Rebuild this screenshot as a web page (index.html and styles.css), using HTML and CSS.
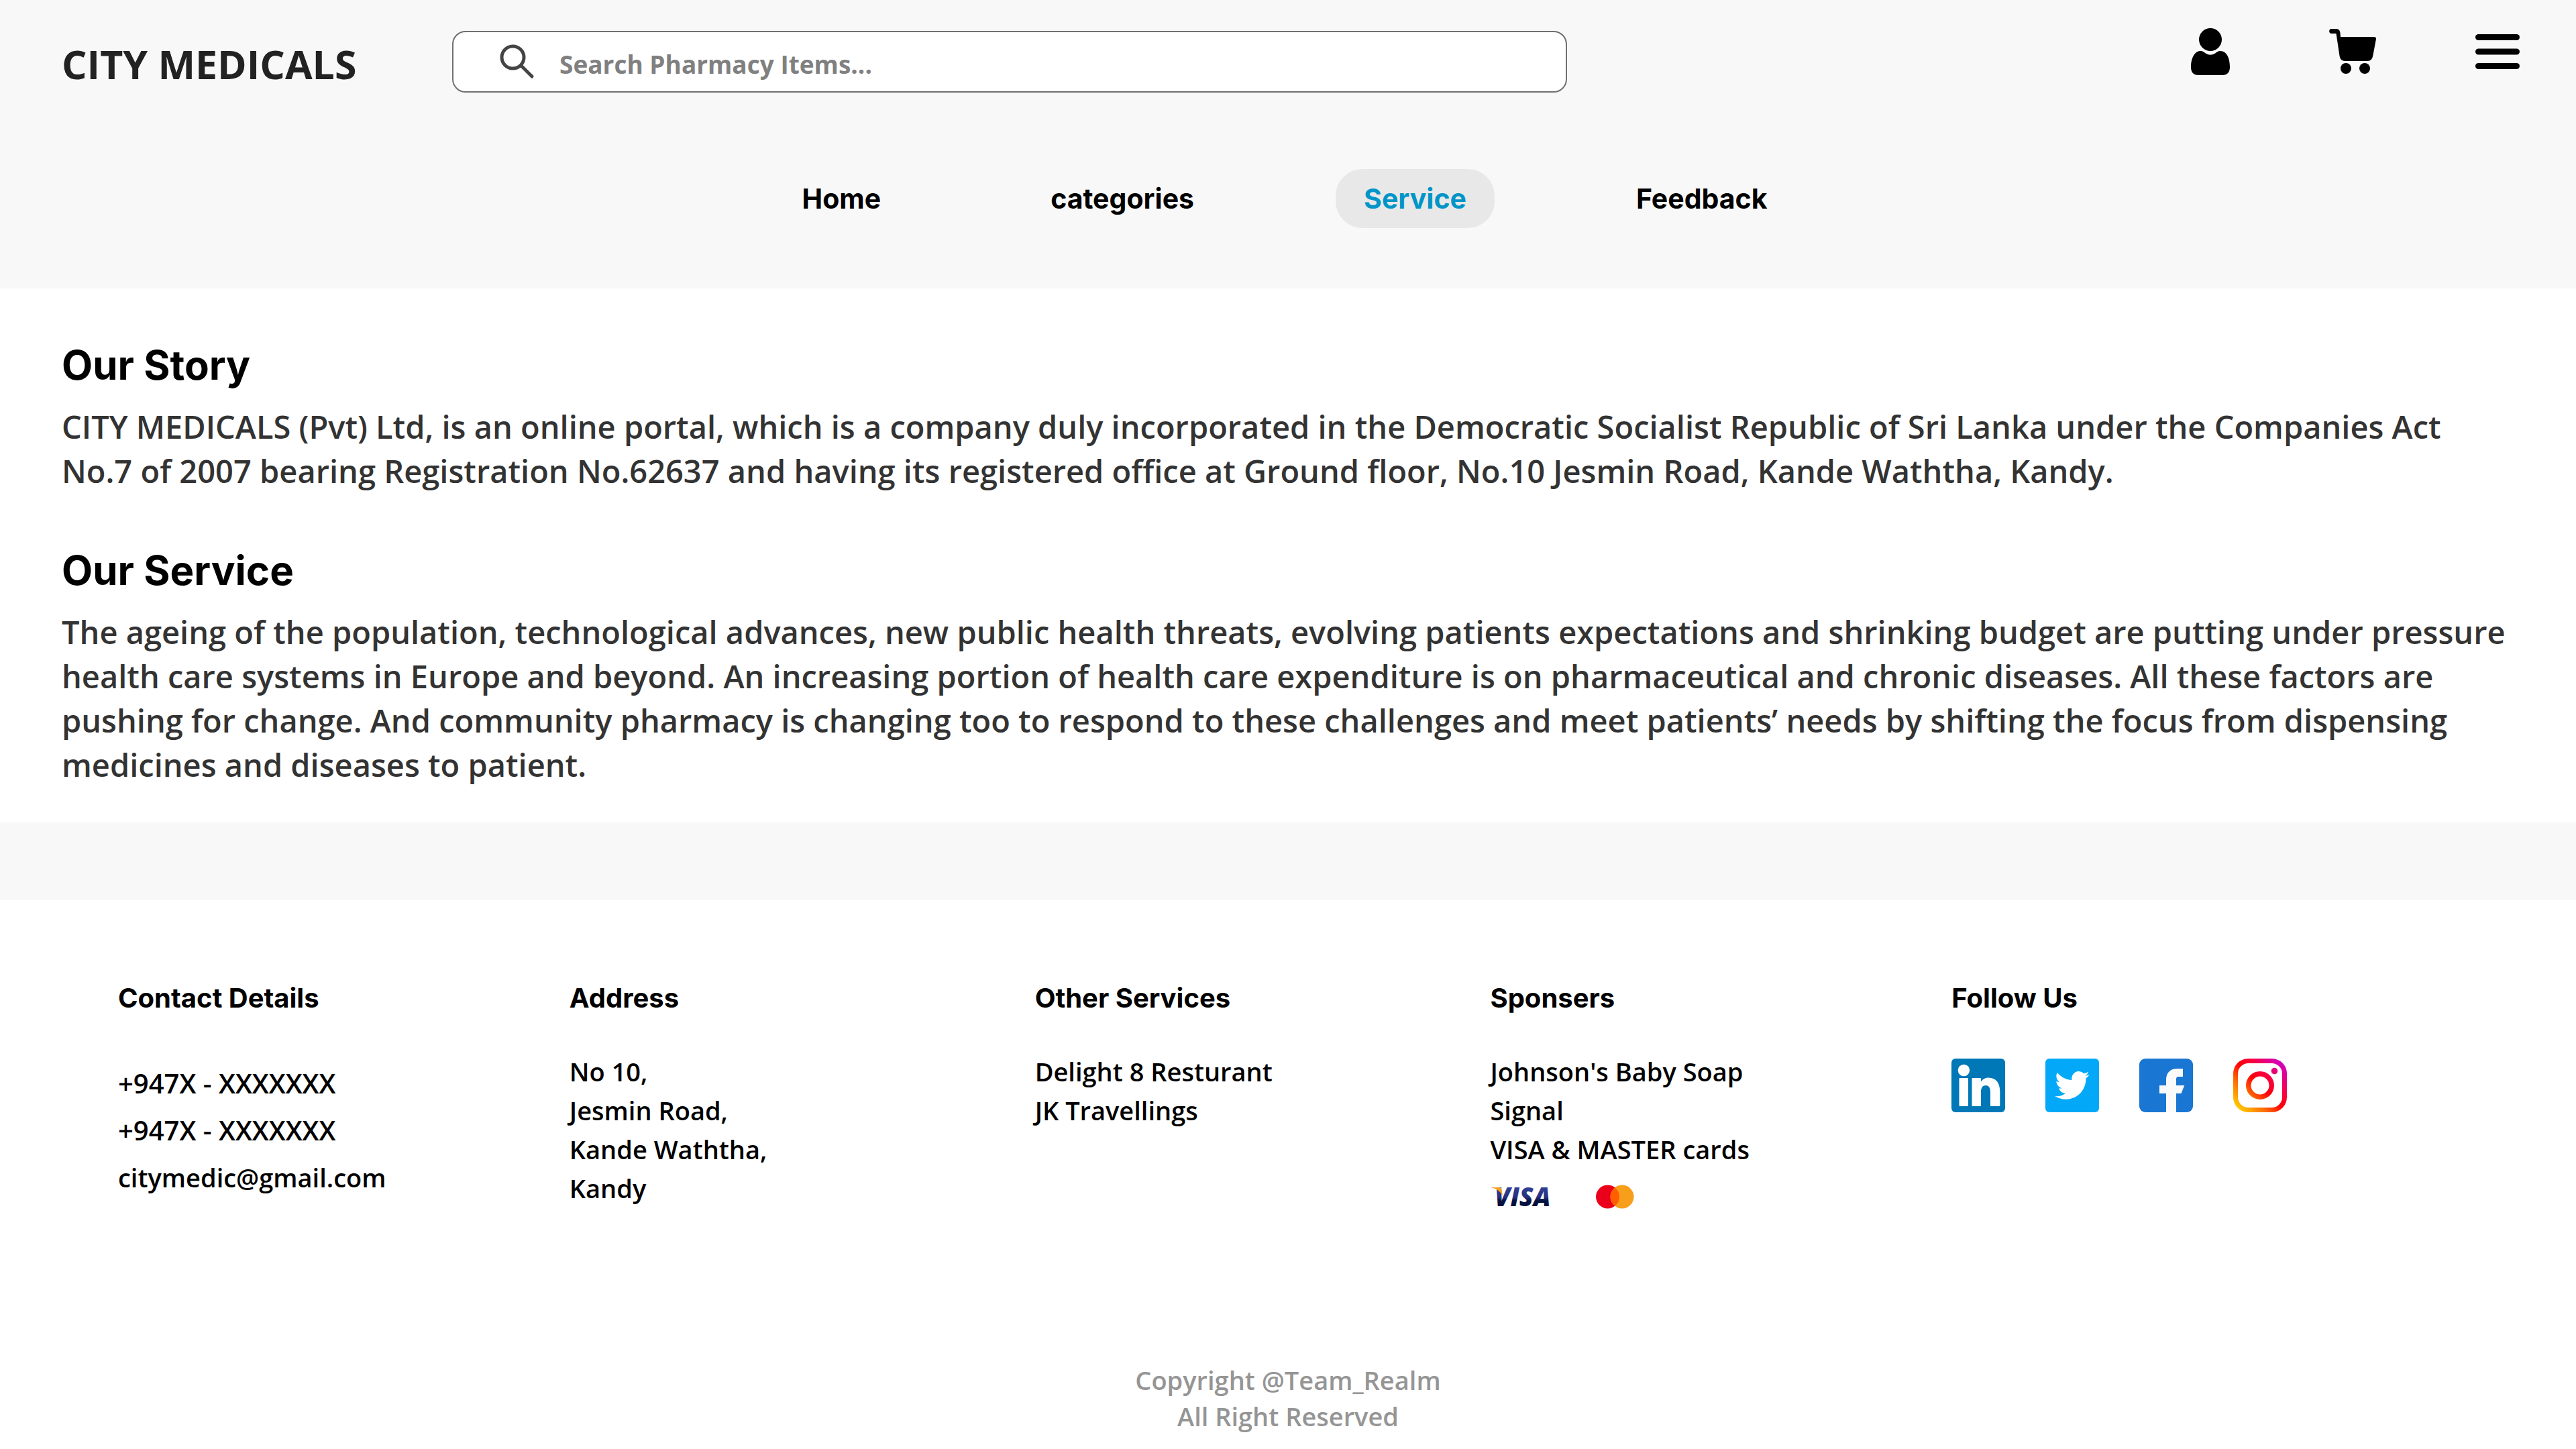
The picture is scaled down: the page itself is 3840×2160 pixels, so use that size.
FILE: index.html
```
<!DOCTYPE html>
<html lang="en">
<head>
<meta charset="utf-8">
<meta name="viewport" content="width=device-width, initial-scale=1">
<title>City Medicals - Service</title>
<link rel="stylesheet" href="styles.css">
</head>
<body>
<header class="header">
  <div class="topbar">
    <a class="brand" href="#">CITY MEDICALS</a>
    <form class="search" role="search">
      <svg class="search-icon" viewBox="0 0 52 52" aria-hidden="true"><circle cx="19.5" cy="19.5" r="16.5"/><path d="M32.5 32.5 48 48"/></svg>
      <input class="search-input" type="search" aria-label="Search pharmacy items" placeholder="Search Pharmacy Items...">
    </form>
    <div class="actions">
      <button class="icon-button" type="button" aria-label="Account">
        <svg width="58" height="70" viewBox="0 0 58 70"><circle cx="29" cy="17" r="17"/><path d="M14 34C6 34 0 44 0 58C0 66 4 70 11 70H47C54 70 58 66 58 58C58 44 53 34 44 34C40 34 38.500 36 36 37.500C31 40.500 27 40.500 22 37.500C19.500 36 18 34 14 34Z"/></svg>
      </button>
      <button class="icon-button" type="button" aria-label="Cart">
        <svg width="70" height="68" viewBox="0 0 70 68"><path d="M3.500 0H10C14 0 16 2 16.500 6L17 12H67C69 12 70 13 70 15L65.500 39C64.500 45 62 48 57 48H24C19 48 16 45 15.500 40L10.500 7H3.500C-1 7-1 0 3.500 0Z"/><circle cx="25" cy="59" r="8"/><circle cx="53" cy="59" r="8"/></svg>
      </button>
      <button class="icon-button" type="button" aria-label="Menu">
        <svg width="66" height="52" viewBox="0 0 66 52"><rect width="66" height="9" rx="4.500"/><rect y="21.500" width="66" height="9" rx="4.500"/><rect y="43" width="66" height="9" rx="4.500"/></svg>
      </button>
    </div>
  </div>
  <nav class="nav" aria-label="Main">
    <a class="nav-link" href="#">Home</a>
    <a class="nav-link" href="#">categories</a>
    <a class="nav-link nav-link-active" href="#" aria-current="page">Service</a>
    <a class="nav-link" href="#">Feedback</a>
  </nav>
</header>

<main class="content">
  <section class="article">
    <h2 class="article-title">Our Story</h2>
    <p class="article-text">CITY MEDICALS (Pvt) Ltd, is an online portal, which is a company duly incorporated in the Democratic Socialist Republic of Sri Lanka under the Companies Act No.7 of 2007 bearing Registration No.62637 and having its registered office at Ground floor, No.10 Jesmin Road, Kande Waththa, Kandy.</p>
  </section>
  <section class="article">
    <h2 class="article-title">Our Service</h2>
    <p class="article-text">The ageing of the population, technological advances, new public health threats, evolving patients expectations and shrinking budget are putting under pressure health care systems in Europe and beyond. An increasing portion of health care expenditure is on pharmaceutical and chronic diseases. All these factors are pushing for change. And community pharmacy is changing too to respond to these challenges and meet patients’ needs by shifting the focus from dispensing medicines and diseases to patient.</p>
  </section>
</main>

<footer class="footer">
  <div class="footer-columns">
    <section>
      <h3 class="footer-title">Contact Details</h3>
      <ul class="footer-list contact-list">
        <li class="phone">+947X - XXXXXXX</li>
        <li class="phone">+947X - XXXXXXX</li>
        <li><a class="mail" href="mailto:citymedic@gmail.com">citymedic@gmail.com</a></li>
      </ul>
    </section>
    <section>
      <h3 class="footer-title">Address</h3>
      <address class="footer-list">No 10,<br>Jesmin Road,<br>Kande Waththa,<br>Kandy</address>
    </section>
    <section>
      <h3 class="footer-title">Other Services</h3>
      <ul class="footer-list">
        <li>Delight 8 Resturant</li>
        <li>JK Travellings</li>
      </ul>
    </section>
    <section>
      <h3 class="footer-title">Sponsers</h3>
      <ul class="footer-list">
        <li>Johnson's Baby Soap</li>
        <li>Signal</li>
        <li>VISA &amp; MASTER cards</li>
      </ul>
      <div class="cards">
        <svg width="108" height="60" viewBox="0 -12 108 60" role="img" aria-label="Visa">
          <defs><linearGradient id="visa" gradientUnits="userSpaceOnUse" x1="0" y1="3" x2="0" y2="31"><stop offset="0" stop-color="#2f4196"/><stop offset=".55" stop-color="#26327f"/><stop offset=".75" stop-color="#03113f"/></linearGradient></defs>
          <text class="visa-text" x="7" y="32" fill="url(#visa)">VISA</text>
          <path d="M1 4H13C16 4 17 5 17.500 8L19 17C16 10 10 6 1 4Z" fill="#f7a01c"/>
        </svg>
        <svg width="57" height="36" viewBox="0 0 57 36" role="img" aria-label="Mastercard"><circle cx="17.500" cy="18" r="17.500" fill="#eb001b"/><circle cx="39" cy="18" r="17.500" fill="#f79e1b"/><path d="M28.250 4.200A17.500 17.500 0 0 1 28.250 31.800A17.500 17.500 0 0 1 28.250 4.200Z" fill="#ff5f00"/></svg>
      </div>
    </section>
    <section>
      <h3 class="footer-title">Follow Us</h3>
      <div class="social">
        <a class="social-link" href="#" aria-label="LinkedIn"><svg viewBox="0 0 80 80"><rect width="80" height="80" rx="6" fill="#0077b7"/><circle cx="18.400" cy="17.500" r="8.700" fill="#fff"/><rect x="11.500" y="29" width="13.500" height="42" rx="1" fill="#fff"/><path d="M31.500 29H43Q44 29 44 30V34.500C46.500 31 50 28.500 55 28.500C67 28.500 72.300 37 72.300 49V70Q72.300 71 71.300 71H59Q58 71 58 70V51C58 44 56.500 40 51 40C46 40 44 44 44 50V70Q44 71 43 71H31.500Q30.500 71 30.500 70V30Q30.500 29 31.500 29Z" fill="#fff"/></svg></a>
        <a class="social-link" href="#" aria-label="Twitter"><svg viewBox="0 0 80 80"><rect width="80" height="80" rx="6" fill="#03a9f8"/><path transform="translate(14.300 14.200) scale(2.140)" d="M23.953 4.570a10 10 0 01-2.825.775 4.958 4.958 0 002.163-2.723c-.951.555-2.005.959-3.127 1.184a4.920 4.920 0 00-8.384 4.482C7.690 8.095 4.067 6.130 1.640 3.162a4.822 4.822 0 00-.666 2.475c0 1.710.870 3.213 2.188 4.096a4.904 4.904 0 01-2.228-.616v.060a4.923 4.923 0 003.946 4.827 4.996 4.996 0 01-2.212.085 4.936 4.936 0 004.604 3.417 9.867 9.867 0 01-6.102 2.105c-.390 0-.779-.023-1.170-.067a13.995 13.995 0 007.557 2.209c9.053 0 13.998-7.496 13.998-13.985 0-.210 0-.420-.015-.630A9.935 9.935 0 0024 4.590z" fill="#fff"/></svg></a>
        <a class="social-link" href="#" aria-label="Facebook"><svg viewBox="0 0 80 80"><rect width="80" height="80" rx="9" fill="#1976d2"/><path d="M40 80V52H30V40H40V32C40 21 46 15 57 15H65V27H59C56 27 55 28 55 31V40H67.300L62.500 52H55V80Z" fill="#fafafa"/></svg></a>
        <a class="social-link" href="#" aria-label="Instagram"><svg viewBox="0 0 80 80"><defs><linearGradient id="insta" gradientUnits="userSpaceOnUse" x1="7" y1="73" x2="73" y2="7"><stop offset="0" stop-color="#ffc800"/><stop offset=".28" stop-color="#ff6a00"/><stop offset=".5" stop-color="#ff0008"/><stop offset=".68" stop-color="#f9003c"/><stop offset="1" stop-color="#d400c0"/></linearGradient></defs><rect x="3.500" y="3.500" width="73" height="73" rx="19" fill="none" stroke="url(#insta)" stroke-width="7"/><circle cx="40" cy="40" r="17.250" fill="none" stroke="url(#insta)" stroke-width="7.500"/><circle cx="61.500" cy="18.500" r="4.800" fill="url(#insta)"/></svg></a>
      </div>
    </section>
  </div>
  <p class="copyright">Copyright @Team_Realm<br>All Right Reserved</p>
</footer>
</body>
</html>
```
FILE: styles.css
```
* {
  box-sizing: border-box;
}

body {
  margin: 0;
  background: #fff;
  color: #000;
  font-family: "Open Sans", "Noto Sans", sans-serif;
  font-weight: 600;
}

h2, h3, p, ul {
  margin: 0;
}

a {
  color: inherit;
  text-decoration: none;
}

svg {
  display: block;
  flex: none;
}

/* Header */
.header {
  padding: 40px 84px 90px 92px;
  background: #f8f8f8;
}

.topbar {
  display: grid;
  grid-template-columns: 582px 1662fr 1420fr;
  align-items: start;
}

.brand {
  padding-top: 12px;
  color: #222;
  font-size: 59px;
  font-weight: 700;
  line-height: 86px;
}

.search {
  display: flex;
  align-items: center;
  gap: 37px;
  height: 92px;
  margin-top: 6px;
  padding: 0 40px 0 69px;
  border: 2px solid #707070;
  border-radius: 20px;
  background: #fff;
}

.search-icon {
  width: 52px;
  height: 52px;
  fill: none;
  stroke: #444;
  stroke-width: 5;
  stroke-linecap: round;
}

.search-input {
  flex: 1;
  min-width: 0;
  height: 100%;
  padding: 6px 0 0;
  border: 0;
  outline: 0;
  background: none;
  color: #222;
  font: 700 37px "Open Sans", sans-serif;
}

.search-input::placeholder {
  color: #808080;
  opacity: 1;
}

.actions {
  display: flex;
  justify-content: flex-end;
  align-items: center;
  gap: 148px;
  height: 74px;
}

.icon-button {
  padding: 0;
  border: 0;
  background: none;
  cursor: pointer;
}

.nav {
  display: flex;
  justify-content: center;
  gap: 169px;
  margin-top: 114px;
  padding-right: 18px;
}

.nav-link {
  padding: 0 42px;
  border-radius: 40px;
  font: 700 41px/88px Inter, sans-serif;
}

.nav-link-active {
  background: #e8e8e8;
  color: #0095c8;
}

/* Page text */
.content {
  display: flex;
  flex-direction: column;
  gap: 79px;
  padding: 78px 92px 53px;
}

.article-title {
  margin-bottom: 23px;
  font: 700 60px/72px Inter, sans-serif;
}

.article-text {
  color: #333;
  font-size: 47px;
  line-height: 66px;
}

/* Footer */
.footer {
  padding-bottom: 22px;
  border-top: 116px solid #f8f8f8;
}

.footer-columns {
  display: grid;
  grid-template-columns: 673fr 694fr 679fr 688fr 931fr;
  padding: 122px 0 0 176px;
}

.footer-title {
  margin-bottom: 56px;
  font: 700 40px/48px Inter, sans-serif;
}

.footer-list {
  padding: 0;
  list-style: none;
  font-size: 38px;
  font-style: normal;
  line-height: 58px;
}

.contact-list {
  padding-top: 12px;
  line-height: 70px;
}

.phone {
  font-size: 40px;
}

.cards {
  display: flex;
  align-items: center;
  gap: 50px;
  padding-top: 12px;
}

.visa-text {
  font: italic 800 38px "Open Sans", sans-serif;
}

.social {
  display: flex;
  gap: 60px;
  padding-top: 10px;
}

.social-link {
  width: 80px;
  height: 80px;
}

.copyright {
  margin-top: 216px;
  color: #959595;
  font-size: 38px;
  line-height: 54px;
  text-align: center;
}
```
